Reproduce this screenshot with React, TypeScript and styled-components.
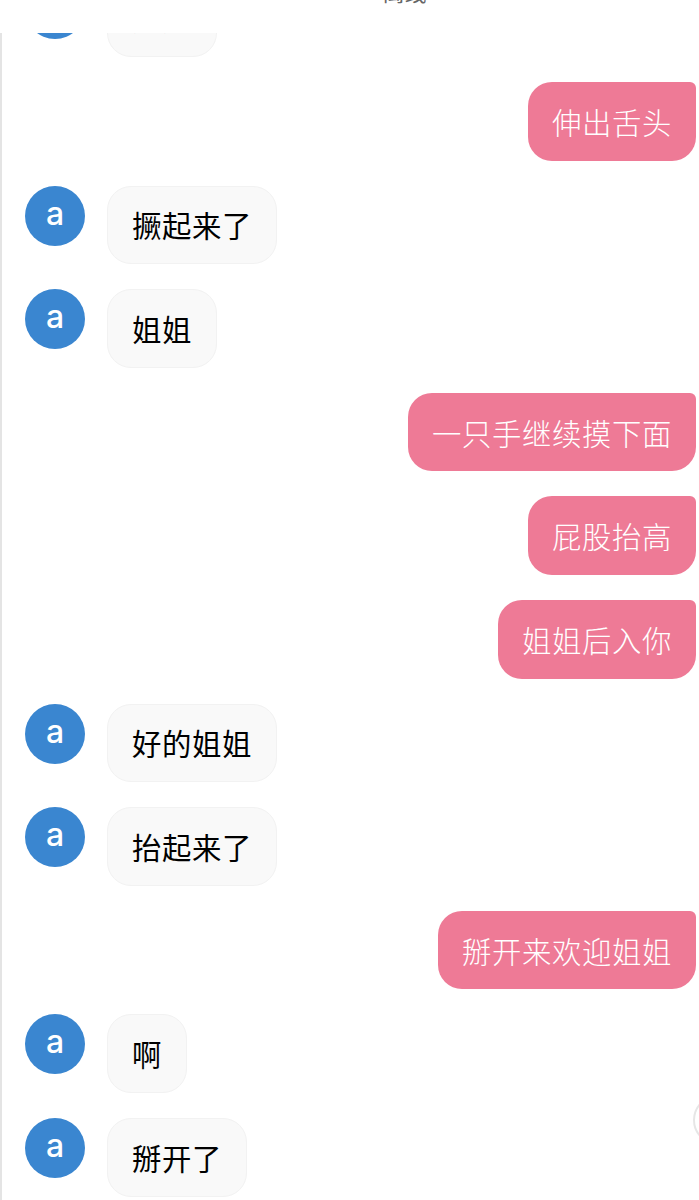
import React from "react";
import styled, { createGlobalStyle } from "styled-components";

const GlobalStyle = createGlobalStyle`
  html, body {
    margin: 0;
    padding: 0;
    background: #ffffff;
  }
`;

const messages = [
  { from: "them", text: "姐姐" },
  { from: "me", text: "伸出舌头" },
  { from: "them", text: "撅起来了" },
  { from: "them", text: "姐姐" },
  { from: "me", text: "一只手继续摸下面" },
  { from: "me", text: "屁股抬高" },
  { from: "me", text: "姐姐后入你" },
  { from: "them", text: "好的姐姐" },
  { from: "them", text: "抬起来了" },
  { from: "me", text: "掰开来欢迎姐姐" },
  { from: "them", text: "啊" },
  { from: "them", text: "掰开了" },
];

const App = () => {
  return (
    <Page>
      <GlobalStyle />
      <Header>
        <Status>离线</Status>
      </Header>
      <ChatPane>
        <MessageList>
          {messages.map((m, i) =>
            m.from === "me" ? (
              <MineRow key={i}>
                <MineBubble>{m.text}</MineBubble>
              </MineRow>
            ) : (
              <TheirRow key={i}>
                <Avatar>a</Avatar>
                <TheirBubble>{m.text}</TheirBubble>
              </TheirRow>
            )
          )}
        </MessageList>
        <ScrollButton />
      </ChatPane>
    </Page>
  );
};
export default App;

const Page = styled.div`
  width: 699px;
  height: 1200px;
  display: flex;
  flex-direction: column;
  overflow: hidden;
  background: #ffffff;
  font-family: "Noto Sans CJK SC", "Liberation Sans", sans-serif;
`;
const Header = styled.div`
  height: 33px;
  flex-shrink: 0;
  display: flex;
  justify-content: center;
  align-items: flex-start;
  padding-left: 110px;
  overflow: hidden;
`;
const Status = styled.div`
  margin-top: -25px;
  font-size: 22px;
  line-height: 33px;
  color: #666666;
`;
const ChatPane = styled.div`
  position: relative;
  flex: 1;
  min-height: 0;
  overflow: hidden;
  border-left: 2px solid #e4e4e4;
`;
const MessageList = styled.div`
  display: flex;
  flex-direction: column;
  gap: 25px;
  margin-top: -54.5px;
  padding: 0 3px 0 23px;
`;
const TheirRow = styled.div`
  display: flex;
  gap: 22px;
  align-items: flex-start;
`;
const MineRow = styled.div`
  display: flex;
  justify-content: flex-end;
`;
const Avatar = styled.div`
  width: 60px;
  height: 60px;
  flex-shrink: 0;
  border-radius: 50%;
  background: #3a86d0;
  color: #ffffff;
  font-family: Inter, "Liberation Sans", sans-serif;
  font-size: 32px;
  font-weight: 500;
  line-height: 56px;
  text-align: center;
`;
const Bubble = styled.div`
  box-sizing: border-box;
  height: 78.6px;
  padding: 0 24px 1px;
  display: flex;
  align-items: center;
  font-size: 29.4px;
  letter-spacing: 0.6px;
  white-space: nowrap;
`;
const TheirBubble = styled(Bubble)`
  background: #f9f9f9;
  border: 1px solid #f2f2f2;
  border-radius: 24px;
  color: #000000;
  font-weight: 400;
`;
const MineBubble = styled(Bubble)`
  background: #ee7a96;
  border-radius: 24px 6px 24px 24px;
  color: #ffffff;
  font-weight: 300;
`;
const ScrollButton = styled.div`
  position: absolute;
  top: 1062px;
  right: -44px;
  width: 46px;
  height: 46px;
  border: 2px solid #e6e6e6;
  border-radius: 50%;
  background: #ffffff;
`;
